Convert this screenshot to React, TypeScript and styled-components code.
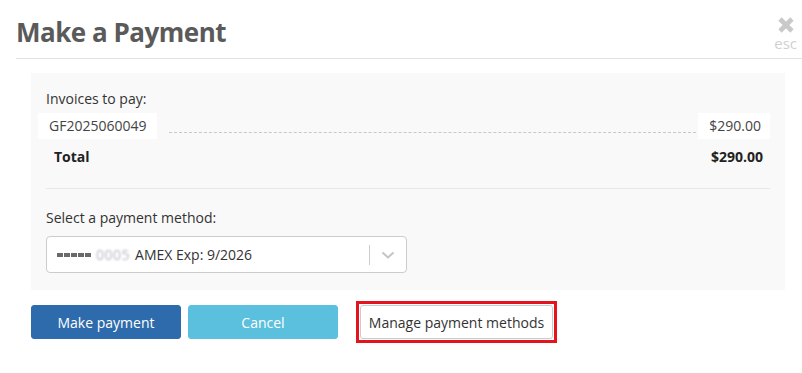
import styled, { createGlobalStyle } from 'styled-components';

const GlobalStyle = createGlobalStyle`
  body {
    margin: 0;
    background: #fff;
    font-family: 'Open Sans', 'Noto Sans', sans-serif;
    color: #333;
  }
`;

const invoices = [{ number: 'GF2025060049', amount: '$290.00' }];

function App() {
  return (
    <>
      <GlobalStyle />
      <Page>
        <Header>
          <Title>Make a Payment</Title>
          <Close>
            <svg width="18" height="18" viewBox="0 0 18 18">
              <path
                d="M3 3 L15 15 M15 3 L3 15"
                stroke="#c9c9c9"
                strokeWidth="4.6"
                strokeLinecap="butt"
              />
            </svg>
            <Esc>esc</Esc>
          </Close>
        </Header>
        <Panel>
          <Label>Invoices to pay:</Label>
          {invoices.map((inv) => (
            <InvoiceRow key={inv.number}>
              <Cell>{inv.number}</Cell>
              <Leader />
              <Cell $right>{inv.amount}</Cell>
            </InvoiceRow>
          ))}
          <TotalRow>
            <span>Total</span>
            <span>$290.00</span>
          </TotalRow>
          <Divider />
          <Label>Select a payment method:</Label>
          <Select>
            <SelectValue>
              <Dots>
                {[0, 1, 2, 3, 4].map((i) => (
                  <Dot key={i} />
                ))}
              </Dots>
              <Blurred>0005</Blurred>
              AMEX Exp: 9/2026
            </SelectValue>
            <Sep />
            <Chevron>
              <svg width="14" height="8" viewBox="0 0 14 8">
                <path d="M1.5 1.5 L7 6.5 L12.5 1.5" fill="none" stroke="#c4c4c4" strokeWidth="2" />
              </svg>
            </Chevron>
          </Select>
        </Panel>
        <Actions>
          <Button $variant="primary">Make payment</Button>
          <Button $variant="info">Cancel</Button>
          <Highlight>
            <Button $variant="default">Manage payment methods</Button>
          </Highlight>
        </Actions>
      </Page>
    </>
  );
}

export default App;

const Page = styled.div`
  width: 802px;
  height: 373px;
`;

const Header = styled.div`
  margin-left: 16px;
  height: 58px;
  border-bottom: 1px solid #e3e3e3;
  display: flex;
  justify-content: space-between;
  align-items: flex-start;
`;

const Title = styled.h1`
  margin: 14px 0 0 0;
  font-size: 26px;
  font-weight: 700;
  letter-spacing: -0.5px;
  color: #5a5a5a;
  line-height: 36px;
`;

const Close = styled.div`
  display: flex;
  flex-direction: column;
  align-items: center;
  margin: 16px 5px 0 0;
`;

const Esc = styled.span`
  font-size: 15px;
  color: #d0d0d0;
  line-height: 15px;
  margin-top: 2px;
`;

const Panel = styled.div`
  margin: 14px 17px 0 31px;
  background: #f9f9f9;
  padding: 16px 15px 16px 15px;
  height: 217px;
  box-sizing: border-box;
  font-size: 14px;
`;

const Label = styled.div`
  font-size: 14px;
  line-height: 20px;
  color: #333;
`;

const InvoiceRow = styled.div`
  display: flex;
  align-items: center;
  margin: 4px 0 0 -8px;
  height: 26px;
`;

const Cell = styled.div<{ $right?: boolean }>`
  background: #fff;
  height: 26px;
  line-height: 26px;
  padding: ${(p) => (p.$right ? '0 9px 0 11px' : '0 11px')};
  color: #444;
  font-size: 14px;
`;

const Leader = styled.div`
  flex: 1;
  align-self: flex-end;
  margin: 0 2px 6px 12px;
  border-bottom: 1px dashed #c8c8c8;
`;

const TotalRow = styled.div`
  display: flex;
  justify-content: space-between;
  padding: 8px 7px 0 8px;
  font-weight: 700;
  font-size: 14px;
  line-height: 20px;
  color: #222;
`;

const Divider = styled.div`
  border-top: 1px solid #e8e8e8;
  margin: 21px 0 19px 0;
`;

const Select = styled.div`
  margin-top: 8px;
  width: 361px;
  height: 37px;
  box-sizing: border-box;
  border: 1px solid #cccccc;
  border-radius: 4px;
  background: #fff;
  display: flex;
  align-items: center;
`;

const SelectValue = styled.div`
  flex: 1;
  padding-left: 10px;
  display: flex;
  align-items: center;
  font-size: 14px;
  color: #333;
`;

const Dots = styled.span`
  display: inline-flex;
  gap: 1px;
  margin-right: 5px;
`;

const Dot = styled.span`
  width: 6px;
  height: 4px;
  background: #6a6a6a;
`;

const Blurred = styled.span`
  color: #b8b8c4;
  filter: blur(1.2px);
  margin-right: 5px;
  letter-spacing: 0.5px;
`;

const Sep = styled.div`
  width: 1px;
  height: 20px;
  background: #cccccc;
`;

const Chevron = styled.div`
  width: 36px;
  display: flex;
  justify-content: center;
  align-items: center;
`;

const Actions = styled.div`
  display: flex;
  align-items: center;
  margin: 11px 0 0 31px;
  gap: 7px;
`;

const Highlight = styled.div`
  margin-left: 11px;
  border: 3px solid #e5131d;
  padding: 1px;
  display: flex;
`;

const variants = {
  primary: { bg: '#2d6bad', color: '#fff', border: '#2d6bad', width: '150px' },
  info: { bg: '#5bc0de', color: '#fff', border: '#5bc0de', width: '150px' },
  default: { bg: '#fff', color: '#333', border: '#cccccc', width: '193px' },
};

const Button = styled.button<{ $variant: keyof typeof variants }>`
  width: ${(p) => variants[p.$variant].width};
  height: 34px;
  border-radius: 3px;
  border: 1px solid ${(p) => variants[p.$variant].border};
  background: ${(p) => variants[p.$variant].bg};
  color: ${(p) => variants[p.$variant].color};
  font-family: inherit;
  font-size: 14px;
  padding: 0;
`;
